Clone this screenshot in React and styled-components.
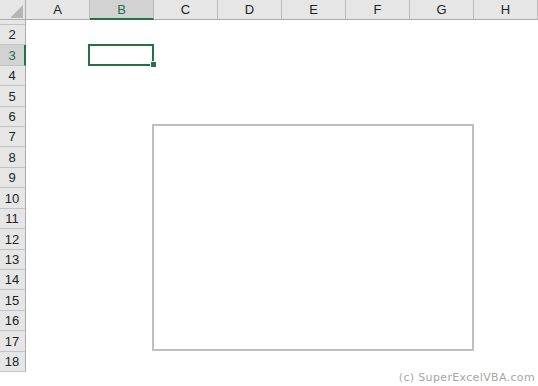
import React from "react";
import styled, { createGlobalStyle } from "styled-components";

const GlobalStyle = createGlobalStyle`
  html, body {
    margin: 0;
    padding: 0;
    background: #fff;
  }
  body {
    font-family: "Liberation Sans", Arial, sans-serif;
  }
`;

const COLUMNS = ["A", "B", "C", "D", "E", "F", "G", "H"];
const SELECTED_COL = "B";
const SELECTED_ROW = 3;

// Excel rows come out at ~20.4px on screen, so some are 20 and some 21
const ROW_START = 24;
const ROW_STEP = 20.41;
const rows = Array.from({ length: 17 }, (_, i) => {
  const top = Math.round(ROW_START + i * ROW_STEP);
  const bottom = Math.round(ROW_START + (i + 1) * ROW_STEP);
  return { n: i + 2, h: bottom - top };
});

function Sheet() {
  return (
    <SheetWrap>
      <HeaderRow>
        <Corner>
          <svg width="13" height="13" viewBox="0 0 13 13">
            <polygon points="0,13 13,13 13,0" fill="#b5b5b5" />
          </svg>
        </Corner>
        {COLUMNS.map((c) => (
          <ColHeader key={c} $active={c === SELECTED_COL}>
            {c}
          </ColHeader>
        ))}
      </HeaderRow>

      <Body>
        <RowHeaders>
          <RowHeader $h={5} />
          {rows.map((r) => (
            <RowHeader key={r.n} $h={r.h} $active={r.n === SELECTED_ROW}>
              {r.n}
            </RowHeader>
          ))}
        </RowHeaders>
        <Cells />
      </Body>

      <Selection>
        <FillHandle />
      </Selection>
      <ChartBox />
      <Watermark>(c) SuperExcelVBA.com</Watermark>
    </SheetWrap>
  );
}

export default function App() {
  return (
    <>
      <GlobalStyle />
      <Sheet />
    </>
  );
}

const SheetWrap = styled.div`
  position: relative;
  width: 538px;
  height: 386px;
  overflow: hidden;
  background: #fff;
`;

const HeaderRow = styled.div`
  display: flex;
  height: 20px;
`;

const Corner = styled.div`
  box-sizing: border-box;
  width: 26px;
  height: 20px;
  background: #e6e6e6;
  border-right: 1px solid #ababab;
  border-bottom: 1px solid #ababab;
  display: flex;
  align-items: flex-start;
  padding: 5px 0 0 10px;
`;

const ColHeader = styled.div`
  box-sizing: border-box;
  width: 64px;
  height: 20px;
  flex: none;
  background: ${(p) => (p.$active ? "#d2d2d2" : "#e6e6e6")};
  border-right: 1px solid #b9b9b9;
  border-bottom: ${(p) => (p.$active ? "2px solid #217346" : "1px solid #ababab")};
  display: flex;
  align-items: center;
  justify-content: center;
  padding-bottom: ${(p) => (p.$active ? "0" : "1px")};
  font-size: 13px;
  color: ${(p) => (p.$active ? "#217346" : "#222")};
  line-height: 1;
`;

const Body = styled.div`
  display: flex;
`;

const RowHeaders = styled.div`
  display: flex;
  flex-direction: column;
  width: 26px;
`;

const RowHeader = styled.div`
  box-sizing: border-box;
  height: ${(p) => p.$h}px;
  background: ${(p) => (p.$active ? "#d2d2d2" : "#e6e6e6")};
  border-bottom: 1px solid #c3c3c3;
  border-right: ${(p) => (p.$active ? "2px solid #217346" : "1px solid #ababab")};
  padding-right: ${(p) => (p.$active ? "0" : "1px")};
  display: flex;
  align-items: center;
  justify-content: center;
  font-size: 13px;
  color: ${(p) => (p.$active ? "#217346" : "#222")};
  line-height: 1;
`;

const Cells = styled.div`
  flex: 1;
  background: #fff;
`;

const Selection = styled.div`
  position: absolute;
  left: 88px;
  top: 44px;
  width: 66px;
  height: 22px;
  box-sizing: border-box;
  border: 2px solid #217346;
`;

const FillHandle = styled.div`
  position: absolute;
  right: -4px;
  bottom: -3px;
  width: 5px;
  height: 5px;
  background: #217346;
  outline: 1px solid #fff;
`;

const ChartBox = styled.div`
  position: absolute;
  left: 152px;
  top: 124px;
  width: 322px;
  height: 227px;
  box-sizing: border-box;
  border: 2px solid #bfbfbf;
  background: #fff;
`;

const Watermark = styled.div`
  position: absolute;
  right: 3px;
  bottom: 2px;
  font-family: "DejaVu Sans", Tahoma, sans-serif;
  font-size: 11px;
  color: #a6a6a6;
  letter-spacing: 0.35px;
`;
